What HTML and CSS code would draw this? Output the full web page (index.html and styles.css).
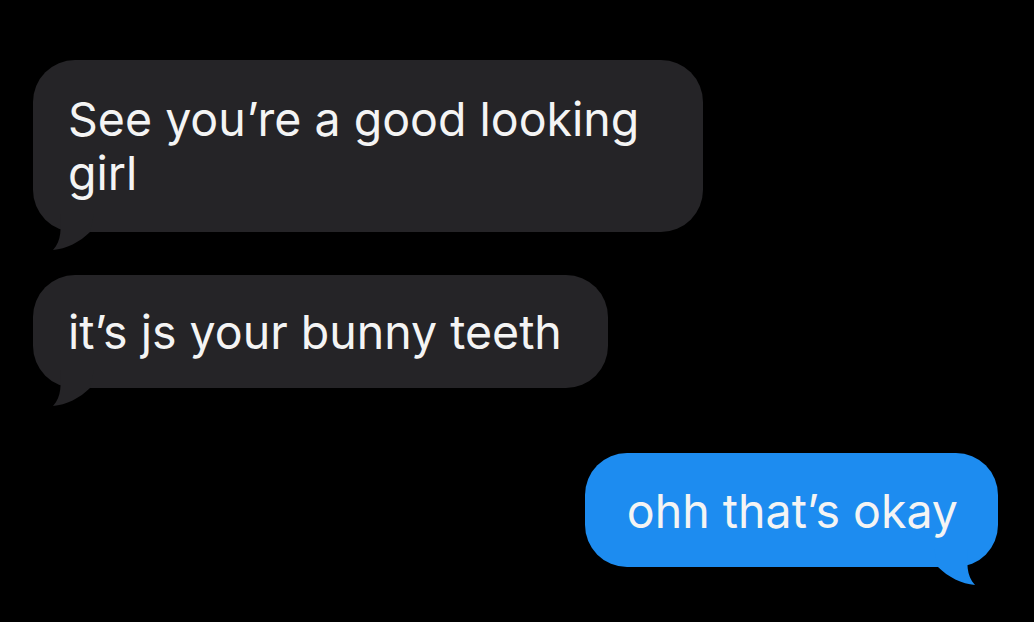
FILE: index.html
```html
<!DOCTYPE html>
<html>
<head>
<meta charset="utf-8">
<link rel="stylesheet" href="styles.css">
</head>
<body>
<main class="thread">
  <div class="bubble in first">See you’re a good looking girl
    <svg class="tail tail-in" width="44" height="36" viewBox="0 0 44 36"><path d="M10 0 C11 14 12 26 3 36 C16 35 30 28 40 18 L44 0 Z"/></svg>
  </div>
  <div class="bubble in second">it’s js your bunny teeth
    <svg class="tail tail-in" width="44" height="36" viewBox="0 0 44 36"><path d="M10 0 C11 14 12 26 3 36 C16 35 30 28 40 18 L44 0 Z"/></svg>
  </div>
  <div class="bubble out">ohh that’s okay
    <svg class="tail tail-out" width="44" height="36" viewBox="0 0 44 36"><path d="M34 0 C33 14 32 26 41 36 C28 35 14 28 4 18 L0 0 Z"/></svg>
  </div>
</main>
</body>
</html>
```
FILE: styles.css
```css
html, body {
  margin: 0;
  padding: 0;
  background: #000;
}
body {
  width: 1034px;
  height: 622px;
  overflow: hidden;
}
.thread {
  display: flex;
  flex-direction: column;
  padding: 60px 36px 0 33px;
  font-family: Inter, "Noto Sans", sans-serif;
  font-size: 46.5px;
  line-height: 54px;
  color: #f4f4f4;
}
.bubble {
  position: relative;
  box-sizing: border-box;
  max-width: 670px;
  border-radius: 42px;
  padding: 32px 38px 32px 35px;
}
.in {
  align-self: flex-start;
  background: #252427;
  fill: #252427;
}
.first {
  width: 670px;
}
.second {
  margin-top: 43px;
  padding: 30px 46px 29px 35px;
}
.out {
  align-self: flex-end;
  margin-top: 65px;
  background: #1d8cf0;
  fill: #1d8cf0;
  padding: 31px 40px 29px 42px;
}
.tail {
  position: absolute;
  bottom: -18px;
}
.tail-in {
  left: 17px;
}
.tail-out {
  right: 20px;
}
```
